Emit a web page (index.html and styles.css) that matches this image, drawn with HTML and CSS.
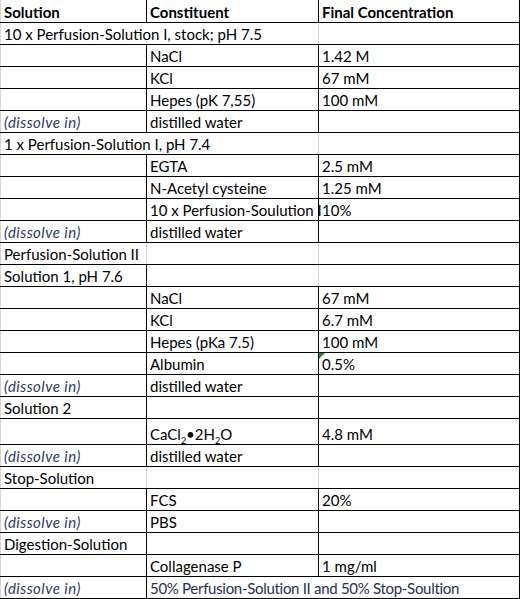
FILE: index.html
```html
<!DOCTYPE html>
<html lang="en">

<head>
    <meta charset="UTF-8">
    <title>Perfusion solutions</title>
    <link rel="stylesheet" href="styles.css">
</head>

<body>
    <table class="sheet">
        <colgroup>
            <col class="c1">
            <col class="c2">
            <col class="c3">
        </colgroup>
        <tr class="head">
            <td>Solution</td>
            <td>Constituent</td>
            <td>Final Concentration</td>
        </tr>
        <tr>
            <td colspan="2" class="soft">10 x Perfusion-Solution I, stock; pH 7.5</td>
            <td></td>
        </tr>
        <tr><td></td><td>NaCl</td><td>1.42 M</td></tr>
        <tr><td></td><td>KCl</td><td>67 mM</td></tr>
        <tr><td></td><td>Hepes (pK 7,55)</td><td>100 mM</td></tr>
        <tr><td class="note">(dissolve in)</td><td>distilled water</td><td></td></tr>
        <tr>
            <td colspan="2" class="soft">1 x Perfusion-Solution I, pH 7.4</td>
            <td></td>
        </tr>
        <tr><td></td><td>EGTA</td><td>2.5 mM</td></tr>
        <tr><td></td><td>N-Acetyl cysteine</td><td>1.25 mM</td></tr>
        <tr><td></td><td>10 x Perfusion-Soulution I</td><td>10%</td></tr>
        <tr><td class="note">(dissolve in)</td><td>distilled water</td><td></td></tr>
        <tr><td class="soft">Perfusion-Solution II</td><td class="soft"></td><td></td></tr>
        <tr><td>Solution 1, pH 7.6</td><td class="soft"></td><td></td></tr>
        <tr><td></td><td>NaCl</td><td>67 mM</td></tr>
        <tr><td></td><td>KCl</td><td>6.7 mM</td></tr>
        <tr><td></td><td>Hepes (pKa 7.5)</td><td>100 mM</td></tr>
        <tr><td></td><td>Albumin</td><td class="flag">0.5%</td></tr>
        <tr><td class="note">(dissolve in)</td><td>distilled water</td><td></td></tr>
        <tr><td>Solution 2</td><td></td><td></td></tr>
        <tr class="tall"><td></td><td>CaCl<sub>2</sub>&bull;2H<sub>2</sub>O</td><td>4.8 mM</td></tr>
        <tr><td class="note">(dissolve in)</td><td>distilled water</td><td></td></tr>
        <tr><td class="soft">Stop-Solution</td><td class="soft"></td><td></td></tr>
        <tr><td></td><td>FCS</td><td>20%</td></tr>
        <tr><td class="note">(dissolve in)</td><td>PBS</td><td></td></tr>
        <tr><td>Digestion-Solution</td><td></td><td></td></tr>
        <tr><td></td><td>Collagenase P</td><td>1 mg/ml</td></tr>
        <tr>
            <td class="note">(dissolve in)</td>
            <td colspan="2" class="long">50% Perfusion-Solution II and 50% Stop-Soultion</td>
        </tr>
    </table>
</body>

</html>
```

FILE: styles.css
```css
* {
    margin: 0;
    padding: 0;
    box-sizing: border-box;
}

body {
    background: #ffffff;
    font-family: 'Lato', 'Liberation Sans', sans-serif;
    font-size: 15px;
    color: #000;
}

.sheet {
    border-collapse: collapse;
    table-layout: fixed;
    width: 519px;
}

.sheet .c1 {
    width: 146px;
}

.sheet .c2 {
    width: 172px;
}

.sheet .c3 {
    width: 201px;
}

.sheet td {
    height: 22px;
    padding: 0 3px 1px 3px;
    border: 1px solid #000;
    vertical-align: bottom;
    white-space: nowrap;
    overflow: visible;
    line-height: 18px;
}

.sheet tr td:first-child {
    border-left-color: #d4d4d4;
}

.sheet .head td {
    border-top: none;
    font-weight: bold;
}

.sheet td.soft {
    border-right-color: #d4d4d4;
}

.sheet td.note {
    font-style: italic;
    color: #2b3a67;
    letter-spacing: 0.45px;
}

.sheet td.long {
    letter-spacing: -0.3px;
    color: #1f2f55;
}

.sheet .tall td {
    height: 26px;
}

.sheet sub {
    font-size: 9px;
    line-height: 0;
}

.sheet td.flag {
    position: relative;
}

.sheet td.flag::before {
    content: "";
    position: absolute;
    top: 0;
    left: 0;
    border-top: 6px solid #1a8a3a;
    border-right: 6px solid transparent;
}
```
